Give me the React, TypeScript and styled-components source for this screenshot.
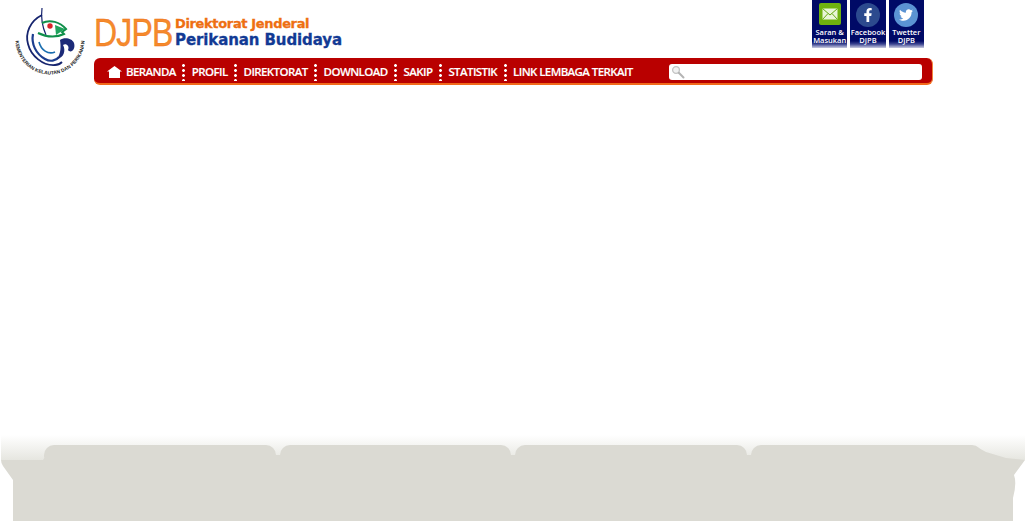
import React from "react";
import styled, { createGlobalStyle } from "styled-components";
import { FaFacebookF, FaTwitter } from "react-icons/fa";

const GlobalStyle = createGlobalStyle`
    html, body {
        margin: 0;
        padding: 0;
        background: #ffffff;
        overflow: hidden;
    }
`;

const Page = styled.div`
    width: 1026px;
    height: 521px;
    display: flex;
    flex-direction: column;
    font-family: "Open Sans", "Liberation Sans", sans-serif;
`;

const Header = styled.header`
    display: flex;
    padding-left: 15px;
`;

const LogoBox = styled.div`
    width: 70px;
    height: 85px;
    padding-top: 7px;
    box-sizing: border-box;
    flex: none;
`;

const MainColumn = styled.div`
    width: 839px;
    margin-left: 9px;
`;

const TopRow = styled.div`
    height: 58px;
    display: flex;
    justify-content: space-between;
`;

const Brand = styled.div`
    display: flex;
    padding-top: 15px;
`;

const BrandMark = styled.div`
    width: 81px;
    height: 36px;
    font-family: "Liberation Sans", Arial, sans-serif;
    font-size: 39px;
    line-height: 36px;
    letter-spacing: -1px;
    color: #f58a2c;
    -webkit-text-stroke: 0.4px #ee6f12;
    transform: scaleX(0.82);
    transform-origin: left center;
`;

const BrandText = styled.div`
    padding-top: 1px;
    font-family: "DejaVu Sans", sans-serif;
    font-weight: 700;
`;

const BrandLine = styled.div<{ $color: string; $size: number; $spacing: number }>`
    color: ${(p) => p.$color};
    font-size: ${(p) => p.$size}px;
    letter-spacing: ${(p) => p.$spacing}px;
    line-height: 16px;
    white-space: nowrap;
    -webkit-text-stroke: 0.3px ${(p) => p.$color};
`;

const Social = styled.div`
    display: flex;
    gap: 3px;
    margin-right: 9px;
`;

const SocialTile = styled.a`
    width: 35.33px;
    height: 48px;
    box-sizing: border-box;
    padding-top: 3px;
    display: flex;
    flex-direction: column;
    align-items: center;
    background: linear-gradient(#000a66 0, #000a66 41px, #3a4390 44px, #c9cbe0 48px);
    color: #ffffff;
    font-size: 7.5px;
    font-weight: 600;
    line-height: 8px;
    text-align: center;
    white-space: nowrap;
`;

const SocialIcon = styled.span<{ $bg: string; $size: number; $round?: boolean }>`
    width: ${(p) => p.$size}px;
    height: ${(p) => p.$size}px;
    margin-bottom: ${(p) => 25 - p.$size}px;
    display: flex;
    align-items: center;
    justify-content: center;
    background: ${(p) => p.$bg};
    border-radius: ${(p) => (p.$round ? "50%" : "2px")};
`;

const Nav = styled.nav`
    height: 27px;
    box-sizing: border-box;
    padding: 2px 0 0 13px;
    display: flex;
    align-items: center;
    background: #b90000;
    border-radius: 6px;
    border-bottom: 2px solid #f26a1b;
    border-right: 1px solid #f2853d;
`;

const NavItem = styled.a`
    color: #ffffff;
    font-size: 11.5px;
    font-weight: 600;
    letter-spacing: -0.6px;
    white-space: nowrap;
    display: flex;
    align-items: center;
    gap: 4px;
    -webkit-text-stroke: 0.15px #ffffff;
`;

const NavDots = styled.span`
    width: 3px;
    height: 18px;
    margin: 0 6.5px;
    flex: none;
    background: radial-gradient(circle, #ffffff 1.2px, transparent 1.6px) center top / 3px 5px repeat-y;
`;

const SearchBox = styled.div`
    width: 253px;
    height: 16px;
    margin-left: 36px;
    padding-left: 2px;
    box-sizing: border-box;
    display: flex;
    align-items: center;
    background: #ffffff;
    border-radius: 3px;
`;

const Footer = styled.footer`
    position: relative;
    height: 86px;
    margin-top: auto;
    display: flex;
    align-items: flex-start;
    padding: 10px 0 0 44px;
    box-sizing: border-box;
    gap: 4px;
`;

const FooterShape = styled.svg`
    position: absolute;
    left: 0;
    top: 0;
`;

const FooterTab = styled.div`
    position: relative;
    width: 231.5px;
    height: 12px;
    background: #dbdad3;
    border-radius: 10px 10px 0 0;
`;

const HomeIcon = () => (
    <svg width="15" height="12" viewBox="0 0 15 12">
        <path d="M7.5 0 L15 5.5 H13 V12 H2 V5.5 H0 Z" fill="#ffffff" />
    </svg>
);

const LensIcon = () => (
    <svg width="14" height="14" viewBox="0 0 14 14">
        <circle cx="5" cy="5" r="3.4" fill="#f1f1f1" stroke="#c4c4c4" strokeWidth="1.3" />
        <path d="M7.8 7.8 L12.5 12.5" stroke="#b4b4b4" strokeWidth="2" strokeLinecap="round" />
    </svg>
);

const MailIcon = () => (
    <svg width="16" height="12" viewBox="0 0 16 12">
        <rect x="0.5" y="0.5" width="15" height="11" fill="#e9f6d8" />
        <path d="M0.5 0.5 L8 7 L15.5 0.5 M0.5 11.5 L6 5.5 M15.5 11.5 L10 5.5" fill="none" stroke="#66aa10" strokeWidth="1" />
    </svg>
);

const MinistryLogo = () => (
    <svg width="70" height="74" viewBox="15 7 70 74">
        <defs>
            <path id="logo-arc" d="M15.5 40 A34.5 34.5 0 0 0 84.5 40" />
        </defs>
        <path d="M42 15 C30 21 25 33 28 44 C31 56 43 66 55 65 C58 65 60 64 62 62" fill="none" stroke="#16246e" strokeWidth="1.8" />
        <path d="M33 34 C31 44 36 54 45 59 C50 62 56 61 59 57" fill="none" stroke="#1c3d8f" strokeWidth="2.2" />
        <path d="M39 42 C41 50 48 55 55 52" fill="none" stroke="#1c6fb0" strokeWidth="1.6" />
        <path d="M42 8 C41 16 42 26 46 35" fill="none" stroke="#16246e" strokeWidth="1.2" />
        <path d="M42 23 C50 19 60 22 66 29 L62 32 L64 34 C58 37 48 38 38 33" fill="none" stroke="#0f8f4a" strokeWidth="2" />
        <path d="M55 25 L65 29 L56 35 Z" fill="#1fa35c" />
        <circle cx="50" cy="26" r="2.7" fill="#d8232a" />
        <path d="M60 40 C64 37 72 38 74 43 C76 49 71 54 68 50 C70 46 66 43 63 45 C66 50 64 58 57 59 C61 53 61 47 60 40 Z" fill="#1c2a78" />
        <text fontFamily="'Liberation Sans', sans-serif" fontSize="4.9" fontWeight="700" fill="#222222">
            <textPath href="#logo-arc" startOffset="50%" textAnchor="middle">
                KEMENTERIAN KELAUTAN DAN PERIKANAN
            </textPath>
        </text>
    </svg>
);

const navItems = ["PROFIL", "DIREKTORAT", "DOWNLOAD", "SAKIP", "STATISTIK", "LINK LEMBAGA TERKAIT"];

const App = () => {
    return (
        <Page>
            <GlobalStyle />
            <Header>
                <LogoBox>
                    <MinistryLogo />
                </LogoBox>
                <MainColumn>
                    <TopRow>
                        <Brand>
                            <BrandMark>DJPB</BrandMark>
                            <BrandText>
                                <BrandLine $color="#ee6f12" $size={13} $spacing={-0.35}>
                                    Direktorat Jenderal
                                </BrandLine>
                                <BrandLine $color="#123a94" $size={15} $spacing={-0.1}>
                                    Perikanan Budidaya
                                </BrandLine>
                            </BrandText>
                        </Brand>
                        <Social>
                            <SocialTile>
                                <SocialIcon $bg="#6fb20f" $size={22}>
                                    <MailIcon />
                                </SocialIcon>
                                Saran &amp;
                                <br />
                                Masukan
                            </SocialTile>
                            <SocialTile>
                                <SocialIcon $bg="#2c4a8e" $size={24} $round>
                                    <FaFacebookF size={14} color="#ffffff" />
                                </SocialIcon>
                                Facebook
                                <br />
                                DJPB
                            </SocialTile>
                            <SocialTile>
                                <SocialIcon $bg="#5b93d3" $size={24} $round>
                                    <FaTwitter size={14} color="#ffffff" />
                                </SocialIcon>
                                Twetter
                                <br />
                                DJPB
                            </SocialTile>
                        </Social>
                    </TopRow>
                    <Nav>
                        <NavItem>
                            <HomeIcon />
                            BERANDA
                        </NavItem>
                        {navItems.map((item) => (
                            <React.Fragment key={item}>
                                <NavDots />
                                <NavItem>{item}</NavItem>
                            </React.Fragment>
                        ))}
                        <SearchBox>
                            <LensIcon />
                        </SearchBox>
                    </Nav>
                </MainColumn>
            </Header>
            <Footer>
                <FooterShape width="1026" height="86" viewBox="0 0 1026 86">
                    <defs>
                        <linearGradient id="shoulder" x1="0" y1="0" x2="0" y2="1">
                            <stop offset="0" stopColor="#ffffff" />
                            <stop offset="1" stopColor="#e6e6e0" />
                        </linearGradient>
                    </defs>
                    <rect x="1" y="0" width="1024" height="25" fill="url(#shoulder)" />
                    <path
                        d="M13 86 V45 L3 31 Q1 28 1 25 H43 Q44 24 45 20 H975 V11 L986 17 L1006 23 L1025 25 L1014 40 Q1017 48 1013 63 V86 Z"
                        fill="#dbdad3"
                    />
                </FooterShape>
                <FooterTab />
                <FooterTab />
                <FooterTab />
                <FooterTab />
            </Footer>
        </Page>
    );
};

export default App;
